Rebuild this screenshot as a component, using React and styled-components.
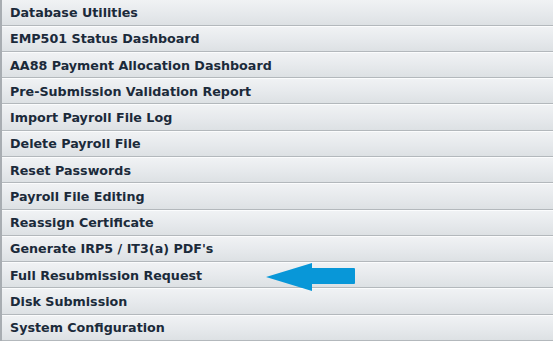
import styled, { createGlobalStyle } from "styled-components"

const Global = createGlobalStyle`
    html, body { margin: 0; padding: 0; background: #ffffff; }
    body { width: 553px; height: 343px; overflow: hidden; }
`

const Menu = styled.ul`
    list-style: none;
    margin: -0.6px 0 0 0;
    padding: 0;
    width: 551px;
    border-left: 2px solid #a8adb2;
    border-right: 1px solid #d6dadd;
    position: relative;
`

const Item = styled.li`
    box-sizing: border-box;
    height: 26.27px;
    display: flex;
    align-items: center;
    padding: 0 0 0 8px;
    background: linear-gradient( to bottom, #f0f2f4 0%, #e6e9ec 55%, #dde1e4 100% );
    border-top: 1px solid #fbfcfd;
    border-bottom: 1.3px solid #b3b8bc;
    font-family: "DejaVu Sans", Verdana, sans-serif;
    font-weight: bold;
    font-size: 12.7px;
    color: #1b2a3a;
    white-space: nowrap;
`

const Pointer = styled.svg`
    position: absolute;
    left: 262px;
    top: 262px;
`

const items = [
    "Database Utilities",
    "EMP501 Status Dashboard",
    "AA88 Payment Allocation Dashboard",
    "Pre-Submission Validation Report",
    "Import Payroll File Log",
    "Delete Payroll File",
    "Reset Passwords",
    "Payroll File Editing",
    "Reassign Certificate",
    "Generate IRP5 / IT3(a) PDF's",
    "Full Resubmission Request",
    "Disk Submission",
    "System Configuration",
]

export default function App() {
    return <>
        <Global />
        <Menu>
            { items.map( label => <Item key={ label }>{ label }</Item> ) }
            <Pointer width="96" height="34" viewBox="0 0 96 34">
                <path d="M2 16 L48 2 L48 7 L90 7 Q91 7 91 8 L91 22 Q91 23 90 23 L48 23 L48 30 Z" fill="#0897d8" />
            </Pointer>
        </Menu>
    </>
}
